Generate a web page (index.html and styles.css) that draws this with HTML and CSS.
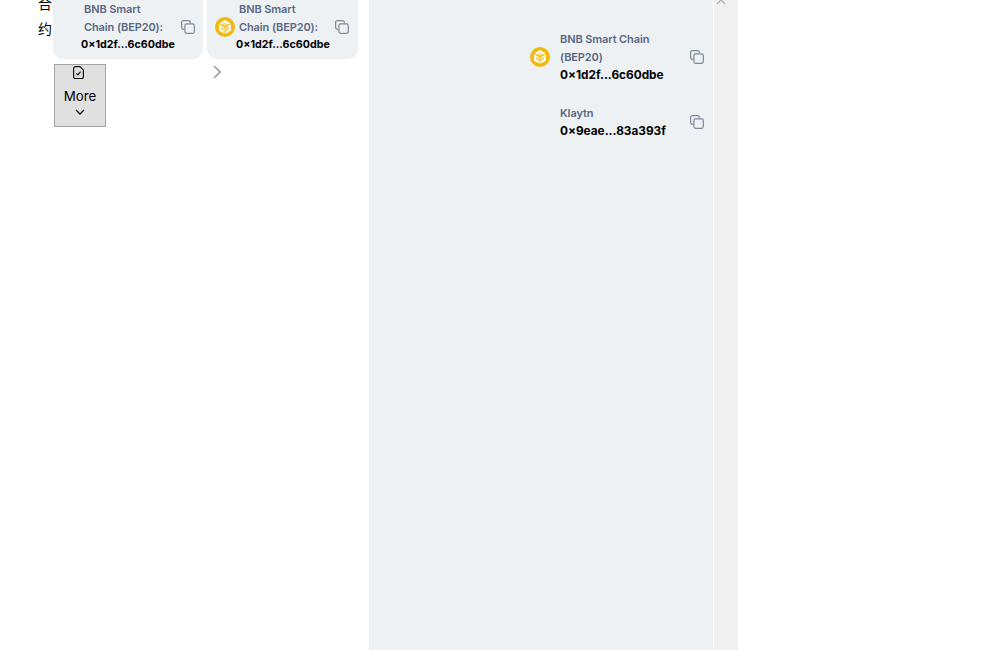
FILE: index.html
```html
<!DOCTYPE html>
<html lang="zh">
<head>
<meta charset="utf-8">
<title>合约</title>
<link rel="stylesheet" href="styles.css">
</head>
<body>
<svg class="defs" width="0" height="0" aria-hidden="true">
  <symbol id="copy" viewBox="0 0 14 14">
    <path d="M9.3 2.4V2.2A1.7 1.7 0 0 0 7.6 .6H2.3A1.7 1.7 0 0 0 .6 2.3v5.3a1.7 1.7 0 0 0 1.6 1.7h.4" fill="none" stroke="currentColor" stroke-width="1.2" stroke-linecap="round"/>
    <rect x="3.9" y="3.9" width="9.4" height="9.4" rx="1.8" fill="none" stroke="currentColor" stroke-width="1.2"/>
  </symbol>
  <symbol id="bnb" viewBox="0 0 20 20">
    <circle cx="10" cy="10" r="10" fill="#f0b90b"/>
    <path d="M10 3 16 6.4V13.4L10 17 4 13.4V6.4Z" fill="#fff"/>
    <path d="M10 5.4 14 7.7 10 10 6 7.7ZM5.6 9V12.4L9.2 14.6V11.2ZM14.4 9V12.4L10.8 14.6V11.2Z" fill="#f0b90b" fill-opacity=".55"/>
    <path d="M10 10V17M10 10 4 6.6M10 10 16 6.6" fill="none" stroke="#f0b90b" stroke-width="1.1"/>
  </symbol>
</svg>
<div class="page">
  <main class="left">
    <div class="heading">合约</div>
    <div class="content">
      <div class="cards">
        <div class="card">
          <div class="logo-gap"></div>
          <div class="info">
            <div class="chain">BNB Smart Chain (BEP20):</div>
            <div class="addr">0×1d2f...6c60dbe</div>
          </div>
          <svg class="copy"><use href="#copy"/></svg>
        </div>
        <div class="card">
          <svg class="logo"><use href="#bnb"/></svg>
          <div class="info">
            <div class="chain">BNB Smart Chain (BEP20):</div>
            <div class="addr">0×1d2f...6c60dbe</div>
          </div>
          <svg class="copy"><use href="#copy"/></svg>
        </div>
      </div>
      <div class="actions">
        <button class="more" type="button">
          <svg class="doc" viewBox="0 0 11 13"><path d="M2.2 .6H6.9L10.4 3.9V10.8A1.7 1.7 0 0 1 8.7 12.5H2.2A1.7 1.7 0 0 1 .6 10.8V2.3A1.7 1.7 0 0 1 2.2 .6Z" fill="none" stroke="#111" stroke-width="1.2"/><path d="M3.3 7.4 4.9 8.9 7.6 5.6" fill="none" stroke="#111" stroke-width="1.2"/></svg>
          <span class="more-label">More</span>
          <svg class="down" viewBox="0 0 10 6"><path d="M1 1 5 5 9 1" fill="none" stroke="#111" stroke-width="1.3"/></svg>
        </button>
        <svg class="next" viewBox="0 0 8 14"><path d="M1 1 7 7 1 13" fill="none" stroke="#9aa0a8" stroke-width="1.6"/></svg>
      </div>
    </div>
  </main>
  <aside class="panel">
    <div class="row">
      <svg class="logo"><use href="#bnb"/></svg>
      <div class="info wide">
        <div class="chain wide-chain">BNB Smart Chain (BEP20)</div>
        <div class="addr wide-addr">0×1d2f...6c60dbe</div>
      </div>
      <svg class="copy"><use href="#copy"/></svg>
    </div>
    <div class="row">
      <div class="logo-gap"></div>
      <div class="info wide">
        <div class="chain wide-chain">Klaytn</div>
        <div class="addr wide-addr">0×9eae...83a393f</div>
      </div>
      <svg class="copy"><use href="#copy"/></svg>
    </div>
  </aside>
  <div class="scrollbar">
    <svg class="up" viewBox="0 0 10 6"><path d="M1 5 5 1 9 5" fill="none" stroke="#b5b5b5" stroke-width="1.4"/></svg>
  </div>
</div>
</body>
</html>
```
FILE: styles.css
```css
* { box-sizing: border-box; }
html, body { margin: 0; height: 650px; overflow: hidden; background: #fff; }
body { font-family: Inter, "Noto Sans CJK SC", sans-serif; color: #000; }
.defs { position: absolute; }
.page { display: flex; height: 650px; width: 738px; }
.left { width: 369px; display: flex; padding-left: 38px; align-items: flex-start; }
.heading { width: 15px; margin-top: -9px; font-size: 14px; line-height: 25px; font-family: "Noto Sans CJK SC", sans-serif; }
.content { margin-top: -10px; }
.cards { display: flex; gap: 4px; }
.card { width: 150px; height: 69px; padding: 10px 8px 0; display: flex; align-items: flex-start; background: #eef1f4; border-radius: 10px; }
.card + .card { width: 151px; }
.logo-gap, .logo { flex: none; width: 20px; height: 20px; }
.card .logo, .card .logo-gap { margin-top: 17px; }
.card .logo-gap { width: 19px; }
.info { width: 93px; margin-left: 1px; flex: none; font-size: 11px; line-height: 18px; font-weight: 600; }
.chain { color: #5a6881; padding-left: 3px; width: 88px; letter-spacing: -0.01em; }
.addr { font-weight: 700; white-space: nowrap; font-size: 10.7px; }
.copy { flex: none; width: 14px; height: 14px; color: #7f8896; }
.card .copy { margin-top: 20px; margin-left: 6px; }
.card .logo-gap ~ .copy { margin-left: 7px; }
.actions { display: flex; margin-top: 5px; }
.more { width: 52px; height: 63px; margin-left: 1px; padding: 0; display: flex; flex-direction: column; align-items: center; background: #e0e0e0; border: 1px solid #a3a3a3; font-family: Inter, sans-serif; font-size: 13.33px; color: #000; }
.doc { width: 11px; height: 13px; margin-top: 1px; margin-right: 3px; }
.more-label { line-height: 19px; margin-top: 8px; }
.down { width: 10px; height: 6px; margin-top: 3px; }
.next { width: 8px; height: 14px; margin: 1px 0 0 107px; }
.panel { width: 344px; padding: 30px 10px 0 161px; display: flex; flex-direction: column; gap: 20px; background: #eef1f4; }
.row { display: flex; align-items: center; }
.wide { width: 130px; margin-left: 10px; }
.wide-chain { padding-left: 0; width: 120px; }
.wide-addr { font-size: 11.8px; }
.row .copy { align-self: flex-start; margin-top: 20px; }
.row + .row .copy { margin-top: 11px; }
.scrollbar { width: 25px; border-left: 1px solid #fff; background: #f0f0f0; display: flex; justify-content: flex-start; }
.up { width: 10px; height: 6px; margin: -1px 0 0 2px; }
```
